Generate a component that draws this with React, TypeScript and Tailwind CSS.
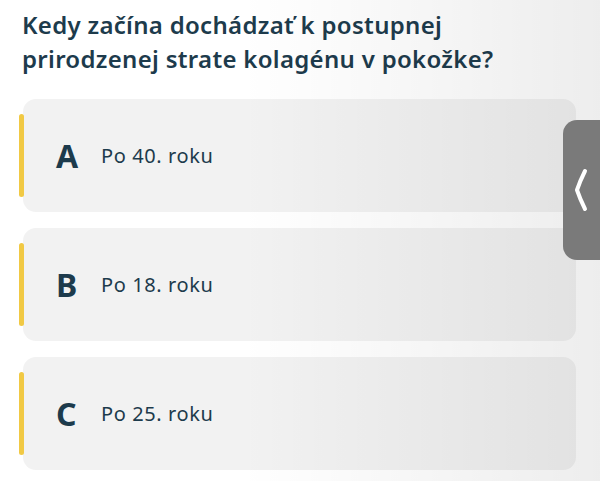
import React from "react";

const options = [
  { letter: "A", text: "Po 40. roku" },
  { letter: "B", text: "Po 18. roku" },
  { letter: "C", text: "Po 25. roku" },
];

function OptionCard({ letter, text }: { letter: string; text: string }) {
  return (
    <div className="flex h-[113px] items-center rounded-[13px] bg-[#f2f2f2]">
      <div className="-ml-[4px] my-[15px] w-[5px] self-stretch rounded-full bg-[#f1c944]" />
      <div className="ml-[32px] w-[45px] text-[32px] font-bold leading-none text-[#1d3b4c]">{letter}</div>
      <div className="text-[20px] leading-none tracking-[0.6px] text-[#1d3b4c]">{text}</div>
    </div>
  );
}

export default function App() {
  return (
    <div
      className="relative h-[481px] w-[600px] overflow-hidden bg-white"
      style={{ fontFamily: "'Noto Sans', sans-serif" }}
    >
      <div className="pl-[22px] pr-[23px]">
        <h1 className="pt-[8px] text-[24px] font-semibold leading-[34px] tracking-[0.3px] text-[#1d3b4c]">
          Kedy začína dochádzať k postupnej
          <br />
          prirodzenej strate kolagénu v pokožke?
        </h1>
        <div className="ml-[1px] mt-[23px] flex w-[553px] flex-col gap-[16px]">
          {options.map((o) => (
            <OptionCard key={o.letter} letter={o.letter} text={o.text} />
          ))}
        </div>
      </div>

      {/* soft shade toward the right edge */}
      <div className="pointer-events-none absolute inset-0 bg-gradient-to-r from-transparent from-40% to-black/[0.07]" />

      <div className="absolute right-0 top-[120px] flex h-[140px] w-[37px] items-center rounded-l-[14px] bg-[#7a7a7a] pl-[11px]">
        <svg width="14" height="44" viewBox="0 0 14 44" fill="none">
          <path d="M11 3 Q6 13 3 22 Q6 31 11 41" stroke="white" strokeWidth="4" strokeLinecap="round" strokeLinejoin="round" />
        </svg>
      </div>
    </div>
  );
}
